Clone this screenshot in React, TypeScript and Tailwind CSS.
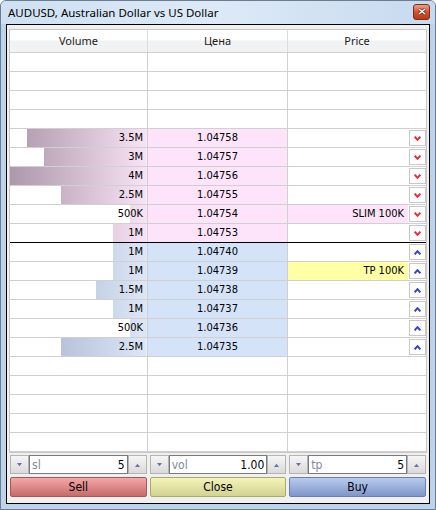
import React from 'react';

type Level = { vol?: string; size?: number; price?: string; order?: string; side?: 'ask' | 'bid'; sep?: boolean };

const COL_W = 137;

const asks: Level[] = [
  { vol: '3.5M', size: 3.5, price: '1.04758' },
  { vol: '3M', size: 3, price: '1.04757' },
  { vol: '4M', size: 4, price: '1.04756' },
  { vol: '2.5M', size: 2.5, price: '1.04755' },
  { vol: '500K', size: 0.5, price: '1.04754', order: 'SLIM 100K' },
  { vol: '1M', size: 1, price: '1.04753', sep: true },
].map((l) => ({ ...l, side: 'ask' as const }));

const bids: Level[] = [
  { vol: '1M', size: 1, price: '1.04740' },
  { vol: '1M', size: 1, price: '1.04739', order: 'TP 100K' },
  { vol: '1.5M', size: 1.5, price: '1.04738' },
  { vol: '1M', size: 1, price: '1.04737' },
  { vol: '500K', size: 0.5, price: '1.04736' },
  { vol: '2.5M', size: 2.5, price: '1.04735' },
].map((l) => ({ ...l, side: 'bid' as const }));

const empty = (n: number): Level[] => Array.from({ length: n }, () => ({}));

const rows: Level[] = [...empty(4), ...asks, ...bids, ...empty(5)];

const cellFont = { fontFamily: '"DejaVu Sans Condensed", Tahoma, "Liberation Sans", sans-serif' };

function Chevron({ up }: { up?: boolean }) {
  return (
    <svg width="7" height="5" viewBox="0 0 7 5">
      {up ? (
        <path d="M0.6 4.4 L3.5 1.2 L6.4 4.4" fill="none" stroke="#3545c6" strokeWidth="2" />
      ) : (
        <path d="M0.6 0.6 L3.5 3.8 L6.4 0.6" fill="none" stroke="#e5303a" strokeWidth="2" />
      )}
    </svg>
  );
}

function Tri({ up }: { up?: boolean }) {
  return (
    <svg width="7" height="4" viewBox="0 0 7 4">
      {up ? <path d="M1 4 L3.5 0.8 L6 4 Z" fill="#6474ac" /> : <path d="M1 0 L3.5 3.2 L6 0 Z" fill="#6474ac" />}
    </svg>
  );
}

function Row({ l }: { l: Level }) {
  const ask = l.side === 'ask';
  const bid = l.side === 'bid';
  const line = l.sep ? 'border-black' : 'border-[#d0d0d0]';
  return (
    <div className={`flex h-[19px] border-b ${line}`} style={cellFont}>
      <div className="relative w-[138px] border-r border-[#d0d0d0] flex items-center justify-end pr-[4px] pt-[1px] text-[11px] text-black">
        {l.size ? (
          <div
            className={`absolute right-0 top-0 bottom-0 bg-no-repeat bg-right bg-[length:137px_100%] ${
              ask
                ? 'bg-gradient-to-r from-[#ad97ab] to-[#f8e4f6]'
                : 'bg-gradient-to-r from-[#a2aec8] to-[#dde7f8]'
            }`}
            style={{ width: (l.size / 4) * COL_W }}
          />
        ) : null}
        <span className="relative">{l.vol}</span>
      </div>
      <div
        className={`w-[140px] border-r border-[#d0d0d0] flex items-center justify-center pt-[1px] text-[11px] text-black ${
          ask ? 'bg-[#fde4fb]' : bid ? 'bg-[#d5e3f9]' : ''
        }`}
      >
        {l.price}
      </div>
      <div className="flex-1 flex">
        <div
          className={`flex-1 flex items-center justify-end pr-[4px] pt-[1px] text-[11px] text-black ${
            l.order ? (ask ? 'bg-[#fde4fb]' : 'bg-[#ffffa6]') : ''
          }`}
        >
          {l.order}
        </div>
        <div className="w-[18px] flex items-center justify-center">
          {l.side ? (
            <div className="w-[17px] h-[16px] border border-[#c8c8c8] bg-white flex items-center justify-center">
              <Chevron up={bid} />
            </div>
          ) : null}
        </div>
      </div>
    </div>
  );
}

function Spin({ label, value }: { label: string; value: string }) {
  return (
    <div className="flex h-[19px]" style={cellFont}>
      <div className="w-[19px] border border-[#b4b4b4] bg-gradient-to-b from-[#f6f6f6] to-[#dadada] flex items-center justify-center">
        <Tri />
      </div>
      <div className="flex-1 border border-[#7a7a7a] bg-white flex items-center justify-between px-[2px] text-[12px]">
        <span className="text-[#7d8aa0]">{label}</span>
        <span className="text-black">{value}</span>
      </div>
      <div className="w-[19px] border border-[#b4b4b4] bg-gradient-to-b from-[#f6f6f6] to-[#dadada] flex items-center justify-center">
        <Tri up />
      </div>
    </div>
  );
}

export default function App() {
  return (
    <div className="w-[436px] h-[510px] bg-[#bcd3ea] border border-[#6a7d92] rounded-t-[6px] flex flex-col overflow-hidden">
      <div className="h-[23px] flex items-center justify-between pl-[7px] pr-[5px] bg-gradient-to-r from-[#cfe0f2] via-[#dde9f6] to-[#c6daef]">
        <span className="text-[11.5px] text-black" style={{ fontFamily: '"Noto Sans", "Open Sans", sans-serif' }}>
          AUDUSD, Australian Dollar vs US Dollar
        </span>
        <div className="w-[17px] h-[16px] mt-[-2px] rounded-[3px] border border-[#7a3020] bg-gradient-to-b from-[#eea088] via-[#d5502c] to-[#bc3a16] flex items-center justify-center">
          <svg width="8" height="7" viewBox="0 0 8 7">
            <path d="M1 1 L7 6 M7 1 L1 6" stroke="#4a1a10" strokeWidth="2.6" />
            <path d="M1 1 L7 6 M7 1 L1 6" stroke="#ffffff" strokeWidth="1.6" />
          </svg>
        </div>
      </div>
      <div className="mx-[5px] h-[480px] border border-black bg-[#f0f0f0] flex flex-col">
        <div className="mt-[4px] mx-[2px] border border-[#c8c8c8] bg-white">
          <div
            className="flex h-[23px] border-b border-[#d0d0d0] bg-[linear-gradient(#ffffff_0%,#ffffff_45%,#f1f2f4_50%,#f1f2f4_100%)] text-[11px] text-[#1a1a1a]"
            style={{ fontFamily: '"Noto Sans", "Open Sans", sans-serif' }}
          >
            <div className="w-[138px] border-r border-[#dcdcdc] flex items-center justify-center">Volume</div>
            <div className="w-[140px] border-r border-[#dcdcdc] flex items-center justify-center">Цена</div>
            <div className="flex-1 flex items-center justify-center">Price</div>
          </div>
          {rows.map((l, i) => (
            <Row key={i} l={l} />
          ))}
        </div>
        <div className="grid grid-cols-3 gap-[3px] px-[3px] mt-[2px]">
          <Spin label="sl" value="5" />
          <Spin label="vol" value="1.00" />
          <Spin label="tp" value="5" />
        </div>
        <div className="grid grid-cols-3 gap-[3px] px-[3px] mt-[3px] text-[12px] text-black" style={cellFont}>
          <button className="h-[20px] rounded-[2px] border border-[#a4585a] bg-gradient-to-b from-[#f4a8a8] to-[#c86a6c]">Sell</button>
          <button className="h-[20px] rounded-[2px] border border-[#a8a870] bg-gradient-to-b from-[#f4f4b8] to-[#d2d292]">Close</button>
          <button className="h-[20px] rounded-[2px] border border-[#6a7eb0] bg-gradient-to-b from-[#b8cbef] to-[#8096c8]">Buy</button>
        </div>
      </div>
    </div>
  );
}
